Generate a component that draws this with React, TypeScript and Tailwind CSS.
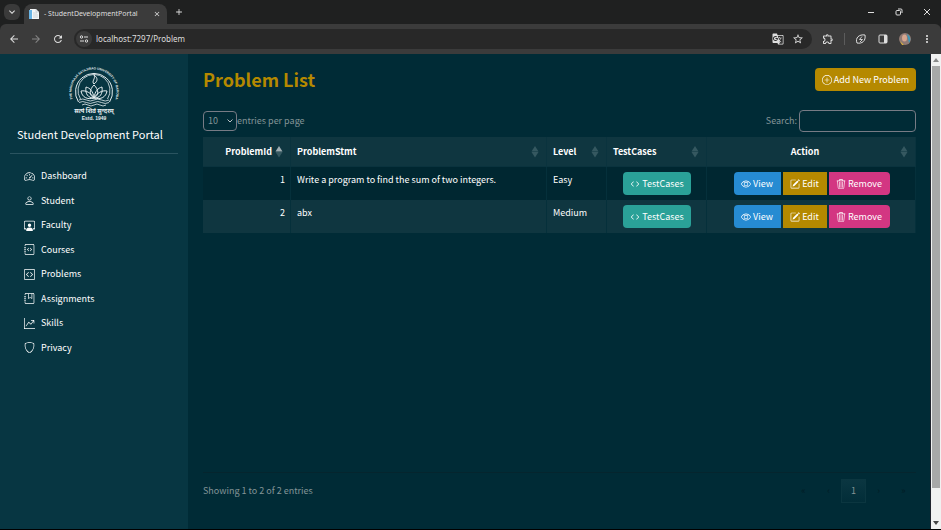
import type { ReactNode } from "react";
import {
  BsSpeedometer2, BsPerson, BsPersonWorkspace, BsJournalCode, BsCodeSquare, BsJournalBookmark,
  BsGraphUpArrow, BsShield, BsPlusCircle, BsCode, BsEye, BsPencilSquare, BsTrash3,
} from "react-icons/bs";
import {
  MdArrowBack, MdArrowForward, MdRefresh, MdStarBorder, MdOutlineExtension, MdMoreVert,
  MdGTranslate, MdClose, MdAdd, MdKeyboardArrowDown,
} from "react-icons/md";

const ui = "font-['Noto_Sans_CJK_SC','Noto_Sans',sans-serif]";

const menu: { label: string; icon: ReactNode }[] = [
  { label: "Dashboard", icon: <BsSpeedometer2 /> },
  { label: "Student", icon: <BsPerson /> },
  { label: "Faculty", icon: <BsPersonWorkspace /> },
  { label: "Courses", icon: <BsJournalCode /> },
  { label: "Problems", icon: <BsCodeSquare /> },
  { label: "Assignments", icon: <BsJournalBookmark /> },
  { label: "Skills", icon: <BsGraphUpArrow /> },
  { label: "Privacy", icon: <BsShield /> },
];

const problems = [
  { id: 1, text: "Write a program to find the sum of two integers.", level: "Easy" },
  { id: 2, text: "abx", level: "Medium" },
];

function Browser() {
  return (
    <header className="bg-[#1f2020] font-['Noto_Sans',sans-serif] text-[#dedede]">
      <div className="flex h-6 items-end">
        <button aria-label="Search tabs" className="mb-1 ml-1 flex size-4 items-center justify-center rounded-md bg-[#3a3a3a]">
          <MdKeyboardArrowDown className="size-3" />
        </button>
        <div className="ml-1 flex h-5 w-[143px] items-center rounded-t-lg bg-[#3b3b3b] pr-[6px] pl-1">
          <svg viewBox="0 0 12 12" className="mr-1 size-3" aria-hidden="true">
            <path d="M2 1h6l3 3v7H2z" fill="#f4f6f7" />
            <path d="M1 2h3v9H1z" fill="#69b4e4" />
            <path d="M8 1v3h3M5 5h4M5 7h5M5 9h5" stroke="#b3c0c8" strokeWidth=".6" fill="none" />
          </svg>
          <span className="flex-1 text-[7px] whitespace-nowrap">- StudentDevelopmentPortal</span>
          <button aria-label="Close tab"><MdClose className="size-2" /></button>
        </div>
        <button aria-label="New tab" className="mb-1 ml-1 flex size-4 items-center justify-center"><MdAdd className="size-[10px]" /></button>
        <div className="mr-[10px] mb-1 ml-auto flex h-4 items-center gap-5">
          <button aria-label="Minimize"><svg viewBox="0 0 8 8" className="size-2"><path d="M1 4.500h6" stroke="currentColor" /></svg></button>
          <button aria-label="Restore"><svg viewBox="0 0 8 8" className="size-2" fill="none" stroke="currentColor"><rect x="1" y="2.500" width="4.500" height="4.500" rx="1" /><path d="M3 1h3a1 1 0 0 1 1 1v3" /></svg></button>
          <button aria-label="Close"><svg viewBox="0 0 8 8" className="size-2"><path d="M1 1l6 6M7 1L1 7" stroke="currentColor" /></svg></button>
        </div>
      </div>
      <div className="flex h-[30px] items-center rounded-t-md bg-[#3b3b3b] px-2">
        <button aria-label="Back"><MdArrowBack className="size-3" /></button>
        <button aria-label="Forward" className="ml-[10px] text-[#858585]"><MdArrowForward className="size-3" /></button>
        <button aria-label="Reload" className="ml-[10px]"><MdRefresh className="size-3" /></button>
        <div className="ml-[10px] flex h-5 flex-1 items-center rounded-full bg-[#282828] pr-2 pl-[2px]">
          <span className="mr-1 flex size-4 items-center justify-center rounded-full bg-[#3b3b3b]">
            <svg viewBox="0 0 10 10" className="size-[10px]" fill="none" stroke="currentColor"><circle cx="2.500" cy="3" r="1.200" /><path d="M5 3h4M1 7h4" /><circle cx="7.500" cy="7" r="1.200" /></svg>
          </span>
          <input aria-label="Address" defaultValue="localhost:7297/Problem" className="min-w-0 flex-1 bg-transparent text-[8px] outline-none" />
          <MdGTranslate className="mr-2 size-3" />
          <MdStarBorder className="size-3" />
        </div>
        <div className="ml-[10px] flex items-center gap-[10px]">
          <MdOutlineExtension className="size-3" />
          <span className="h-3 w-px bg-[#5c5c5c]" />
          <svg viewBox="0 0 12 12" className="size-3" fill="none" stroke="currentColor"><path d="M2 10C0 5 4 1 10 2c1 6-3 9-8 8z" /><path d="M7 3.500L4.500 6.500h3L5 9" strokeWidth=".9" /></svg>
          <svg viewBox="0 0 12 12" className="size-3"><rect x="2" y="2" width="8" height="8" rx="1" fill="none" stroke="currentColor" /><path d="M7 2h3v8H7z" fill="currentColor" /></svg>
          <svg viewBox="0 0 12 12" className="size-3"><circle cx="6" cy="6" r="6" fill="#907a74" /><path d="M8 1a6 6 0 0 1 2 9z" fill="#3b9abb" /><path d="M1 8l4 4H3z" fill="#d8b03b" /><ellipse cx="5.500" cy="5" rx="2.500" ry="3.500" fill="#d6a68f" /></svg>
          <MdMoreVert className="size-3" />
        </div>
      </div>
    </header>
  );
}

function Crest() {
  return (
    <svg viewBox="0 0 54 56" className="mx-auto h-14 w-[54px] overflow-visible text-[#e6eef0]" role="img" aria-label="University crest">
      <defs><path id="ring" d="M8.600 38.900A22.500 22.500 0 1 1 45.400 38.900" /></defs>
      <text fill="currentColor" fontSize="3.200" fontWeight="700" textAnchor="middle" className="font-['Liberation_Sans',sans-serif]">
        <textPath href="#ring" startOffset="50%">THE MAHARAJA SAYAJIRAO UNIVERSITY OF BARODA</textPath>
      </text>
      <g fill="none" stroke="currentColor" strokeWidth="1">
        <path d="M11.500 36A18.500 18.500 0 1 1 42.500 36" />
        <path d="M13.500 33A16 16 0 1 1 40.500 33" strokeWidth=".8" />
        <path d="M27 32c-5-3-5-8 0-13 5 5 5 10 0 13z" />
        <path d="M27 32c-6 0-9-4-8-11 4 1 7 4 8 11zM27 32c6 0 9-4 8-11-4 1-7 4-8 11z" />
        <path d="M27 32c-7 2-12-1-13-7 5-1 10 2 13 7zM27 32c7 2 12-1 13-7-5-1-10 2-13 7z" />
        <path d="M27 18c-3-3 2-5 0-9 4 3 4 6 0 9z" />
        <path d="M12 34q3.700-2 7.500 0t7.500 0 7.500 0 7.500 0M12 36.500q3.700-2 7.500 0t7.500 0 7.500 0 7.500 0M15 39q3-2 6 0t6 0 6 0 6 0" strokeWidth=".8" />
      </g>
      <text x="27" y="47" textAnchor="middle" fill="currentColor" fontSize="6" fontWeight="700" className="font-['Noto_Sans_Devanagari','Noto_Sans',sans-serif]">सत्यं शिवं सुन्दरम्</text>
      <text x="27" y="54" textAnchor="middle" fill="currentColor" fontSize="5" fontWeight="700" className="font-['Liberation_Sans',sans-serif]">Estd. 1949</text>
    </svg>
  );
}

function Sidebar() {
  return (
    <aside className="w-[188px] shrink-0 bg-[#073642] px-[10px] pt-3 text-white">
      <Crest />
      <p className="mt-1 pr-2 text-center text-[11px] leading-4 whitespace-nowrap">Student Development Portal</p>
      <hr className="mt-[11px] border-[#2a5460]" />
      <nav className="mt-[10px] flex h-[196px] flex-col">
        {menu.map((item) => (
          <a key={item.label} href="#" className="flex flex-1 items-center gap-[6px] pl-[14px]">
            <span className="text-[11px]">{item.icon}</span>
            {item.label}
          </a>
        ))}
      </nav>
    </aside>
  );
}

function Sort({ active = false }: { active?: boolean }) {
  return (
    <svg viewBox="0 0 8 12" className="h-3 w-2 shrink-0" aria-hidden="true">
      <path d="M4 0l3.500 5.500h-7z" fill={active ? "#9fadb2" : "#355860"} />
      <path d="M4 11.500L7.500 6h-7z" fill="#355860" />
    </svg>
  );
}

function Head({ label, width, active, align = "" }: { label: string; width: string; active?: boolean; align?: string }) {
  return (
    <th className={`border-r border-b border-[#0a333e] pr-[7px] pl-[6px] font-bold ${width}`}>
      <div className="flex items-center gap-[3px]">
        <span className={`flex-1 ${align}`}>{label}</span>
        <Sort active={active} />
      </div>
    </th>
  );
}

const button = "inline-flex h-[23px] items-center justify-center gap-[2px] text-[9px] leading-4 text-white [&>svg]:size-[10px]";

function Problems() {
  return (
    <main className="flex min-w-0 flex-1 flex-col pt-[14px] pr-[14px] pb-[26px] pl-[15px]">
      <div className="flex h-6 items-start justify-between">
        <h1 className="text-[18px] leading-[22px] font-bold text-[#b58900]">Problem List</h1>
        <button className={`${button} w-[101px] rounded bg-[#b58900]`}><BsPlusCircle />Add New Problem</button>
      </div>
      <div className="mt-[18px] flex items-center justify-between text-[#839496]">
        <div className="flex items-center">
          <div className="grid items-center">
            <select id="size" className="col-start-1 row-start-1 h-5 w-[34px] appearance-none rounded-sm border border-[#777b85] bg-[#002b36] pl-1"><option>10</option></select>
            <svg viewBox="0 0 6 4" className="pointer-events-none col-start-1 row-start-1 mr-1 h-1 w-[6px] justify-self-end" fill="none" stroke="#b9c1c4" aria-hidden="true"><path d="M.5.5L3 3 5.500.5" /></svg>
          </div>
          <label htmlFor="size">entries per page</label>
        </div>
        <div className="flex items-center gap-[2px]">
          <label htmlFor="search">Search:</label>
          <input id="search" type="search" className="h-[22px] w-[117px] rounded-sm border border-[#777b85] bg-transparent px-1" />
        </div>
      </div>
      <table className="mt-[5px] w-full table-fixed border-separate border-spacing-0 text-left text-white">
        <thead>
          <tr className="h-[30px] bg-[#0f3640]">
            <Head label="ProblemId" width="w-[88px]" active align="text-right" />
            <Head label="ProblemStmt" width="" />
            <Head label="Level" width="w-[60px]" />
            <Head label="TestCases" width="w-[100px]" />
            <Head label="Action" width="w-[209px]" align="text-center" />
          </tr>
        </thead>
        <tbody>
          {problems.map((p) => (
            <tr key={p.id} className="h-[33px] align-top odd:bg-[#002731] even:bg-[#0f3640] *:border-r *:border-[#05303b] *:pt-[5px] *:pr-[5px] *:pl-[6px]">
              <td className="text-right">{p.id}</td>
              <td>{p.text}</td>
              <td>{p.level}</td>
              <td>
                <div className="flex justify-center">
                  <button className={`${button} w-[68px] rounded bg-[#2aa198]`}><BsCode />TestCases</button>
                </div>
              </td>
              <td>
                <div className="flex justify-center gap-[2px]">
                  <button className={`${button} w-[47px] rounded-l bg-[#268bd2]`}><BsEye />View</button>
                  <button className={`${button} w-[44px] bg-[#b58900]`}><BsPencilSquare />Edit</button>
                  <button className={`${button} w-[61px] rounded-r bg-[#d33682]`}><BsTrash3 />Remove</button>
                </div>
              </td>
            </tr>
          ))}
        </tbody>
      </table>
      <footer className="mt-auto flex items-center justify-between border-t border-[#05252e] pt-[6px] text-[#839496]">
        <p>Showing 1 to 2 of 2 entries</p>
        <nav aria-label="Pages" className="flex text-center text-[#001b24] *:h-6 *:w-[25px]">
          <button disabled>«</button>
          <button disabled>‹</button>
          <button className="border border-[#0b3640] bg-linear-to-b from-[#0b3641] to-[#022d38] text-[#839496]">1</button>
          <button disabled>›</button>
          <button disabled>»</button>
        </nav>
      </footer>
    </main>
  );
}

export default function App() {
  return (
    <div className="flex min-h-screen flex-col border-b border-black bg-[#002b36]">
      <Browser />
      <div className={`flex flex-1 text-[9px] leading-4 ${ui}`}>
        <Sidebar />
        <Problems />
        <div className="flex w-[11px] shrink-0 flex-col items-center justify-between border-l border-[#20232d] bg-[#f1f1f1] py-1">
          <svg viewBox="0 0 6 4" className="mb-1 h-1 w-[6px] shrink-0"><path d="M3 0l3 4H0z" fill="#8a8a8a" /></svg>
          <div className="mb-[33px] w-2 flex-1 bg-[#a8a8a8]" />
          <svg viewBox="0 0 6 4" className="h-1 w-[6px] shrink-0"><path d="M3 4l3-4H0z" fill="#444" /></svg>
        </div>
      </div>
    </div>
  );
}
